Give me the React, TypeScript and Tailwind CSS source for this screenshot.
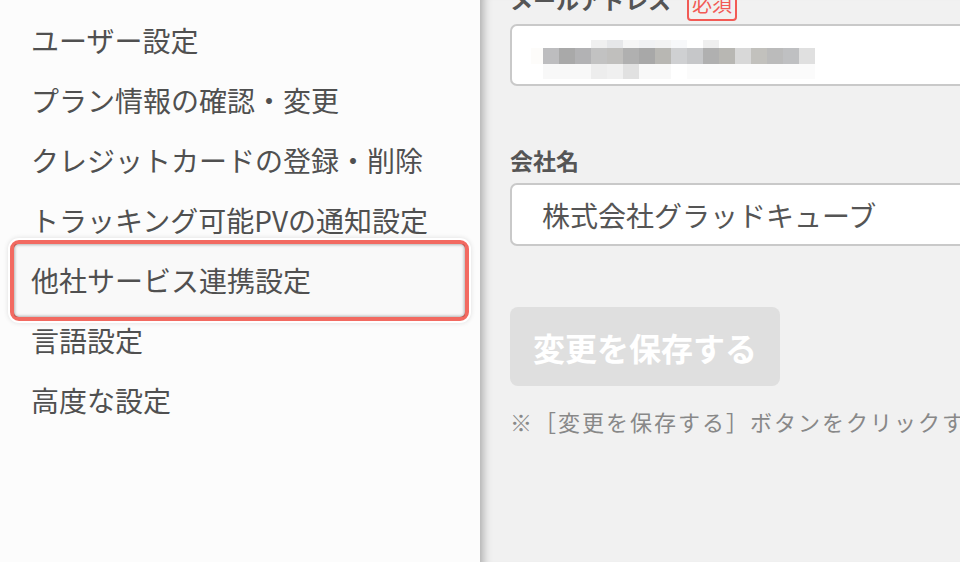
import React from "react";

const menuItems = [
  "ユーザー設定",
  "プラン情報の確認・変更",
  "クレジットカードの登録・削除",
  "トラッキング可能PVの通知設定",
  "他社サービス連携設定",
  "言語設定",
  "高度な設定",
];

// masked e-mail address: rows of pixel tiles (x offset, width, colour)
const maskRows: { y: number; h: number; cells: [number, number, string][] }[] = [
  {
    y: 0,
    h: 8,
    cells: [
      [60, 16, "#f0f0f0"],
      [76, 16, "#e6e7e9"],
      [92, 16, "#f6f6f6"],
      [108, 16, "#f1f2f4"],
      [124, 16, "#f3f3f3"],
      [140, 16, "#f7f8fa"],
      [172, 16, "#efefef"],
    ],
  },
  {
    y: 8,
    h: 16,
    cells: [
      [0, 12, "#fdfcfa"],
      [12, 16, "#bdbdbf"],
      [28, 16, "#a9a9a9"],
      [44, 16, "#b2b2b4"],
      [60, 16, "#c2c2c2"],
      [76, 16, "#c0bfbd"],
      [92, 16, "#b0b0b0"],
      [108, 16, "#a8a8a8"],
      [124, 16, "#b8b7b3"],
      [140, 16, "#cfd0d2"],
      [156, 16, "#c6c7c9"],
      [172, 16, "#b0b0b0"],
      [188, 16, "#b8b7b3"],
      [204, 16, "#d8d8d8"],
      [220, 16, "#c2c1bd"],
      [236, 16, "#bbbbbb"],
      [252, 16, "#bfc0c2"],
      [268, 16, "#e0e0e0"],
    ],
  },
  {
    y: 24,
    h: 15,
    cells: [
      [12, 48, "#f8f8f8"],
      [60, 16, "#ededed"],
      [76, 16, "#f0f0f0"],
      [92, 16, "#e1e1e1"],
      [108, 32, "#f8f8f8"],
      [156, 128, "#fbfbfb"],
    ],
  },
];

function MaskedEmail() {
  return (
    <svg width="284" height="40" viewBox="0 0 284 40" aria-hidden="true">
      {maskRows.map((row) =>
        row.cells.map(([x, w, c]) => (
          <rect key={`${row.y}-${x}`} x={x} y={row.y} width={w} height={row.h} fill={c} />
        ))
      )}
    </svg>
  );
}

export default function App() {
  return (
    <div className="flex h-[562px] w-[960px] overflow-hidden font-['Noto_Sans_CJK_JP','Noto_Sans',sans-serif]">
      {/* settings menu */}
      <aside className="w-[480px] shrink-0 bg-[#fcfcfc]">
        <ul className="pt-[10px]">
          {menuItems.map((label) => {
            const active = label === "他社サービス連携設定";
            return (
              <li
                key={label}
                className="relative flex h-[60px] items-center px-[31px] text-[28px] leading-none text-[#505050]"
              >
                {active && (
                  <div className="absolute bottom-[-11px] left-[10px] right-[11px] top-[-10px] rounded-[9px] border-[4px] border-[#f26a61] bg-[#f9f9f9] shadow-[0_0_0_2px_#ffffff,0_0_5px_2px_rgba(0,0,0,0.12)]">
                    <div className="h-full w-full rounded-[3px] shadow-[inset_0_0_3px_1px_rgba(0,0,0,0.28)]" />
                  </div>
                )}
                <span className="relative">{label}</span>
              </li>
            );
          })}
        </ul>
      </aside>

      {/* account form */}
      <main className="flex-1 overflow-hidden bg-[#f1f1f1] pl-[30px] shadow-[inset_12px_0_10px_-9px_rgba(0,0,0,0.3)]">
        <div className="-mt-[17px] w-[640px]">
          <div className="mb-[9px] flex h-[32px] items-center gap-[16px]">
            <span className="text-[23px] font-bold text-[#555]">メールアドレス</span>
            <span className="mt-[10px] rounded-[4px] border-2 border-[#f25a55] px-[3px] text-[20px] leading-[30px] text-[#f25a55]">
              必須
            </span>
          </div>
          <div className="flex h-[62px] items-start rounded-[7px] border-2 border-[#c9c9c9] bg-white pl-[19px] pt-[14px]">
            <MaskedEmail />
          </div>

          <div className="mb-[7px] mt-[58px] flex h-[32px] items-center">
            <span className="text-[23px] font-bold text-[#555]">会社名</span>
          </div>
          <div className="flex h-[63px] items-center rounded-[7px] border-2 border-[#c9c9c9] bg-white px-[30px] text-[28px] text-[#555]">
            株式会社グラッドキューブ
          </div>

          <button
            type="button"
            className="mt-[61px] flex h-[79px] w-[270px] items-center justify-center rounded-[8px] bg-[#dfdfdf] text-[32px] font-bold text-white"
          >
            変更を保存する
          </button>

          <p className="mt-[20px] whitespace-nowrap text-[22px] leading-[30px] tracking-[2px] text-[#888]">
            ※［変更を保存する］ボタンをクリックすると変更が反映されます。
          </p>
        </div>
      </main>
    </div>
  );
}
